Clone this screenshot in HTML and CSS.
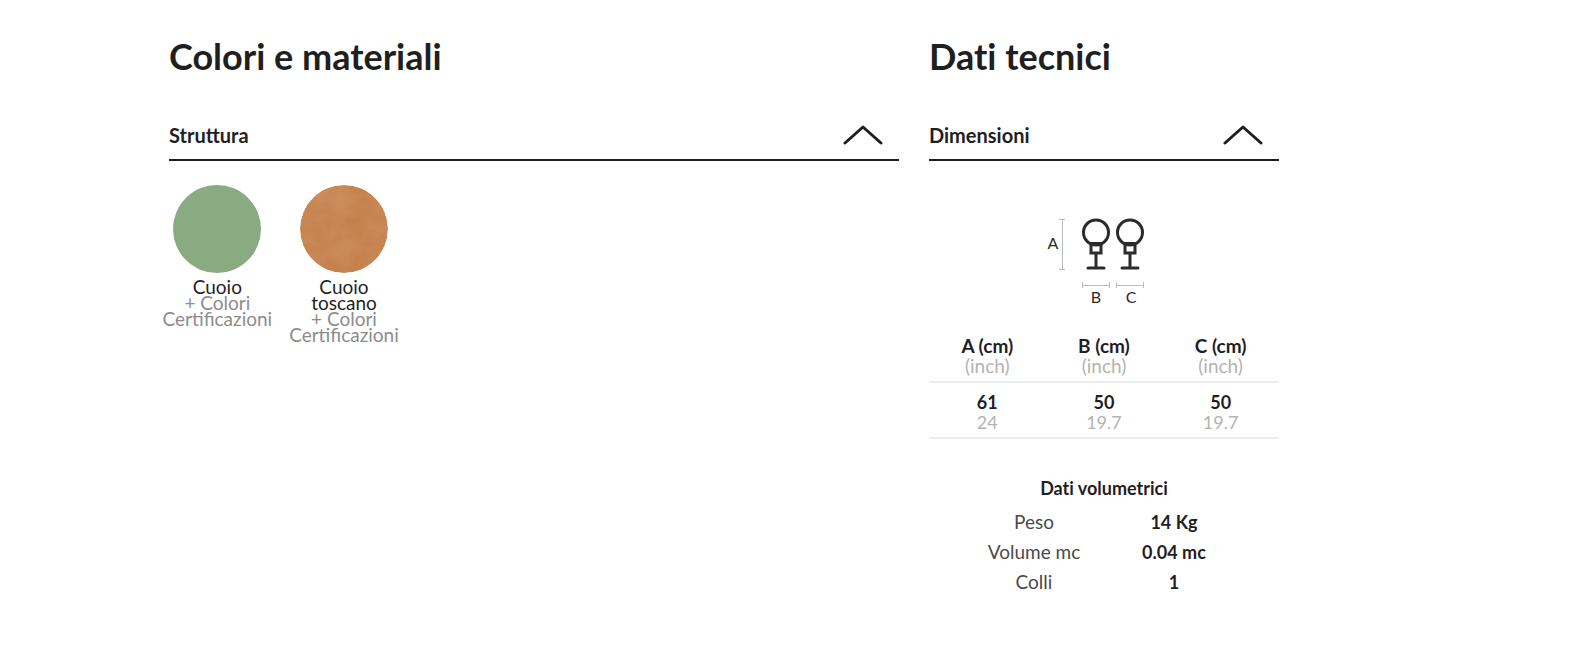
FILE: index.html
```
<!DOCTYPE html>
<html lang="it">
<head>
    <meta charset="utf-8">
    <meta name="viewport" content="width=device-width, initial-scale=1" />
    <title>Colori e materiali</title>
    <link rel="stylesheet" href="styles.css">
</head>

<body>

<div class="product-info">
    <section class="col materials">
        <h2>Colori e materiali</h2>
        <button class="toggle" type="button" aria-expanded="true" aria-controls="struttura">
            <span>Struttura</span>
            <svg class="chevron" viewBox="0 0 40 20" aria-hidden="true">
                <path d="M2 18 L20 2 L38 18" />
            </svg>
        </button>
        <div id="struttura" class="swatches">
            <div class="swatch">
                <span class="circle green"></span>
                <p>Cuoio</p>
                <p class="more">+ Colori Certificazioni</p>
            </div>
            <div class="swatch">
                <svg class="circle" viewBox="0 0 88 88" aria-hidden="true">
                    <defs>
                        <clipPath id="disc"><circle cx="44" cy="44" r="44" /></clipPath>
                        <filter id="leather" x="0" y="0" width="100%" height="100%">
                            <feTurbulence type="fractalNoise" baseFrequency="0.04" numOctaves="4" seed="8" />
                            <feColorMatrix values="0 0 0 0 0.8  0 0 0 0 0.55  0 0 0 0 0.37  1.2 0 0 0 -0.3" />
                        </filter>
                    </defs>
                    <g clip-path="url(#disc)">
                        <rect width="88" height="88" fill="#c5804c" />
                        <rect width="88" height="88" filter="url(#leather)" opacity="0.3" />
                    </g>
                </svg>
                <p>Cuoio toscano</p>
                <p class="more">+ Colori Certificazioni</p>
            </div>
        </div>
    </section>

    <section class="col technical">
        <h2>Dati tecnici</h2>
        <button class="toggle" type="button" aria-expanded="true" aria-controls="dimensioni">
            <span>Dimensioni</span>
            <svg class="chevron" viewBox="0 0 40 20" aria-hidden="true">
                <path d="M2 18 L20 2 L38 18" />
            </svg>
        </button>
        <div id="dimensioni">
            <svg class="drawing" viewBox="0 0 134 90" role="img" aria-label="Dimensioni A, B, C">
                <g class="measure">
                    <path d="M22 1.5h6M25.5 2v49M22 51.5h6" />
                    <path d="M45.5 64v6M45 67.500h27M72.500 64v6" />
                    <path d="M79.500 64v6M79 67.500h27M106.500 64v6" />
                </g>
                <g class="lamp">
                    <circle cx="59" cy="14.5" r="12.5" />
                    <path d="M54 25.5h10v9.5h-10zM59 35v15M51 50h16" />
                    <circle cx="93" cy="14.5" r="12.5" />
                    <path d="M88 25.5h10v9.5h-10zM93 35v15M85 50h16" />
                </g>
                <text x="16" y="31">A</text>
                <text x="59" y="85">B</text>
                <text x="94" y="85">C</text>
            </svg>

            <table class="sizes">
                <thead>
                    <tr>
                        <th>A (cm)<span>(inch)</span></th>
                        <th>B (cm)<span>(inch)</span></th>
                        <th>C (cm)<span>(inch)</span></th>
                    </tr>
                </thead>
                <tbody>
                    <tr>
                        <td>61<span>24</span></td>
                        <td>50<span>19.7</span></td>
                        <td>50<span>19.7</span></td>
                    </tr>
                </tbody>
            </table>

            <table class="volume">
                <caption>Dati volumetrici</caption>
                <tr>
                    <th>Peso</th>
                    <td>14 Kg</td>
                </tr>
                <tr>
                    <th>Volume mc</th>
                    <td>0.04 mc</td>
                </tr>
                <tr>
                    <th>Colli</th>
                    <td>1</td>
                </tr>
            </table>
        </div>
    </section>
</div>

<script>
    document.querySelectorAll(".toggle").forEach((button) => {
        button.addEventListener("click", () => {
            const panel = document.getElementById(button.getAttribute("aria-controls"));
            panel.hidden = !panel.hidden;
            button.setAttribute("aria-expanded", String(!panel.hidden));
        });
    });
</script>
</body>
</html>
```

FILE: styles.css
```
* {
    box-sizing: border-box;
}

body {
    margin: 0;
    background-color: #ffffff;
    color: #1f1f1f;
    font-family: Lato, sans-serif;
    font-size: 18px;
    line-height: 20px;
}

[hidden] {
    display: none !important;
}

.product-info {
    display: flex;
    max-width: 1294px;
    padding: 35px 0 44px 154px;
}

.col {
    padding: 0 15px;
}

.materials {
    width: 66.666%;
}

.technical {
    width: 33.333%;
    font-variant-ligatures: none;
}

h2 {
    margin: 0 0 41px;
    font-size: 36px;
    font-weight: bold;
    line-height: 42px;
}

.toggle {
    display: flex;
    align-items: center;
    justify-content: space-between;
    width: 100%;
    height: 43px;
    padding: 0 16px 7px 0;
    border: none;
    border-bottom: 2px solid #1f1f1f;
    background: none;
    color: inherit;
    font-family: inherit;
    font-size: 20px;
    font-weight: bold;
    cursor: pointer;
}

.chevron {
    width: 40px;
    height: 20px;
    fill: none;
    stroke: #1f1f1f;
    stroke-width: 3;
    stroke-linecap: round;
    stroke-linejoin: round;
}

.toggle[aria-expanded="false"] .chevron {
    transform: rotate(180deg);
}

.swatches {
    display: flex;
    flex-wrap: wrap;
    margin: 24px -15px 0;
}

.swatch {
    display: flex;
    flex-direction: column;
    align-items: center;
    width: 16.666%;
    padding: 0 8px;
    font-size: 19px;
    line-height: 16px;
    text-align: center;
}

.swatch p {
    margin: 0;
}

.swatch .more {
    color: #8c8c8c;
}

.circle {
    width: 88px;
    height: 88px;
    margin-bottom: 6px;
    border-radius: 50%;
}

.green {
    background-color: #8aaa82;
}

.drawing {
    display: block;
    width: 134px;
    height: 90px;
    margin: 57px auto 28px;
    fill: none;
}

.drawing text {
    fill: #2b2b2b;
    font-size: 16px;
    text-anchor: middle;
}

.measure {
    stroke: #bdbdbd;
    stroke-width: 1;
}

.lamp {
    stroke: #2b2b2b;
    stroke-width: 3;
    stroke-linecap: round;
}

table {
    border-collapse: collapse;
    table-layout: fixed;
    text-align: center;
}

.sizes {
    width: 100%;
}

.sizes th,
.sizes td {
    padding: 10px 0 5px;
    border-bottom: 2px solid #ececec;
    font-weight: bold;
}

.sizes th {
    padding-top: 0;
    font-size: 19px;
}

.sizes td {
    padding-top: 9px;
}

.sizes span {
    display: block;
    color: #b3b3b3;
    font-weight: normal;
}

.volume {
    width: 80%;
    margin: 34px auto 0;
}

.volume caption {
    padding: 5px 0 9px;
    font-weight: bold;
}

.volume th,
.volume td {
    padding: 5px 0;
}

.volume th {
    color: #4a4a4a;
    font-size: 19px;
    font-weight: normal;
}

.volume td {
    font-weight: bold;
}
```
